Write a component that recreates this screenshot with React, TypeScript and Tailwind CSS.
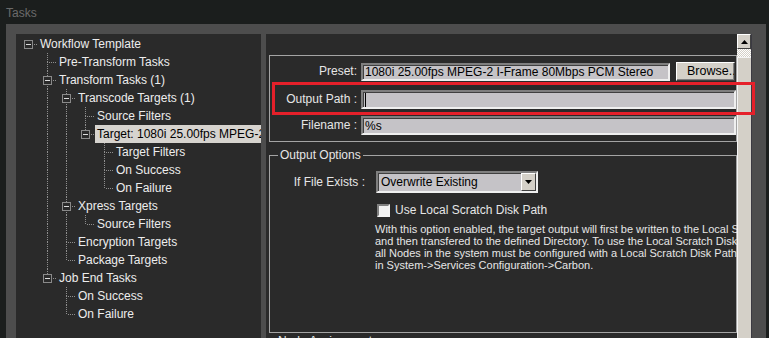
import React from 'react';

type TNode = { label: string; children?: TNode[]; selected?: boolean };

const tree: TNode = {
  label: 'Workflow Template',
  children: [
    { label: 'Pre-Transform Tasks' },
    {
      label: 'Transform Tasks (1)',
      children: [
        {
          label: 'Transcode Targets (1)',
          children: [
            { label: 'Source Filters' },
            {
              label: 'Target: 1080i 25.00fps MPEG-2 I-Frame 80Mbps PCM Stereo',
              selected: true,
              children: [{ label: 'Target Filters' }, { label: 'On Success' }, { label: 'On Failure' }],
            },
          ],
        },
        { label: 'Xpress Targets', children: [{ label: 'Source Filters' }] },
        { label: 'Encryption Targets' },
        { label: 'Package Targets' },
      ],
    },
    { label: 'Job End Tasks', children: [{ label: 'On Success' }, { label: 'On Failure' }] },
  ],
};

type Row = { node: TNode; level: number; guides: boolean[]; last: boolean };

// guides[i] = does the ancestor at level i still have siblings below (draw a vertical line)
function flatten(node: TNode, level: number, guides: boolean[], last: boolean, out: Row[]) {
  out.push({ node, level, guides, last });
  const kids = node.children ?? [];
  kids.forEach((c, i) => {
    flatten(c, level + 1, [...guides, level > 0 && !last], i === kids.length - 1, out);
  });
}

const DOT = '#8e8e8e';

// one 19px column of the tree: dotted connectors and the +/- box
const Cell = ({ top, bottom, stub, box }: { top?: boolean; bottom?: boolean; stub?: boolean; box?: boolean }) => (
  <svg width="19" height="18" className="shrink-0" shapeRendering="crispEdges">
    {top && <line x1="8.5" y1="0" x2="8.5" y2="9" stroke={DOT} strokeDasharray="1 1" />}
    {bottom && <line x1="8.5" y1="9" x2="8.5" y2="18" stroke={DOT} strokeDasharray="1 1" />}
    {stub && <line x1="10" y1="9.5" x2="18" y2="9.5" stroke={DOT} strokeDasharray="1 1" />}
    {box && (
      <>
        <rect x="4.5" y="5.5" width="8" height="8" fill="#2a2a2a" stroke="#8a8a8a" />
        <line x1="6" y1="9.5" x2="11" y2="9.5" stroke="#dcdcdc" />
      </>
    )}
  </svg>
);

const TreeRow = ({ row }: { row: Row }) => {
  const { node, level, guides, last } = row;
  return (
    <div className="flex h-[18px]">
      {guides.map((g, i) => (
        <Cell key={i} top={g} bottom={g} />
      ))}
      <Cell top={level > 0} bottom={level > 0 && !last} stub box={!!node.children} />
      <span
        className={`-ml-[1px] px-[2px] leading-[18px] whitespace-nowrap ${
          node.selected ? 'bg-[#d6d3ce] text-black' : 'text-[#ededed]'
        }`}
      >
        {node.label}
      </span>
    </div>
  );
};

const Field = ({ value, caret, className }: { value?: string; caret?: boolean; className: string }) => (
  <div
    className={`flex items-center overflow-hidden whitespace-nowrap border-2 border-t-[#7f7f7f] border-l-[#7f7f7f] border-r-[#efefef] border-b-[#efefef] bg-[#c5c3c7] pl-[2px] text-black shadow-[inset_1px_1px_0_#404040] ${className}`}
  >
    {caret && <span className="h-[14px] w-[1px] bg-black" />}
    {value}
  </div>
);

export default function App() {
  const rows: Row[] = [];
  flatten(tree, 0, [], true, rows);

  return (
    <div className="relative h-[338px] w-[769px] overflow-hidden bg-[#1b1e1d] font-['Liberation_Sans',Arial,sans-serif] text-[12px]">
      <div className="h-[24px] pl-[6px] pt-[6px] leading-[14px] text-[#6b6b6b]">Tasks</div>

      <div className="ml-[6px] flex h-[314px] w-[760px] bg-[#4d4d4d] pl-[10px] pt-[10px]">
        {/* tree */}
        <div className="h-full w-[245px] shrink-0 overflow-hidden bg-[#2a2a2a] pl-[4px] pt-[1px]">
          {rows.map((r, i) => (
            <TreeRow key={i} row={r} />
          ))}
        </div>

        {/* properties */}
        <div className="ml-[5px] h-full w-[471px] shrink-0 overflow-hidden bg-[#2a2a2a] pl-[3px] pt-[21px] text-[#e6e6e6]">
          <div className="w-[468px] border border-[#a4a4a4] pb-[6px] pt-[6px]">
            <div className="flex h-[19px]">
              <div className="w-[87px] text-right leading-[19px]">Preset:</div>
              <Field value="1080i 25.00fps MPEG-2 I-Frame 80Mbps PCM Stereo" className="ml-[4px] mt-[1px] h-[18px] w-[309px]" />
              <div className="ml-[6px] h-[19px] w-[59px] overflow-hidden whitespace-nowrap border border-t-white border-l-white border-r-[#404040] border-b-[#404040] bg-[#d4d0c8] pl-[10px] text-[12.5px] leading-[17px] text-black shadow-[inset_-1px_-1px_0_#808080]">
                Browse...
              </div>
            </div>
            <div className="mt-[9px] flex h-[19px]">
              <div className="w-[87px] text-right leading-[19px]">Output Path :</div>
              <Field caret className="ml-[4px] h-[19px] w-[375px]" />
            </div>
            <div className="mt-[7px] flex h-[19px]">
              <div className="w-[87px] text-right leading-[19px]">Filename :</div>
              <Field value="%s" className="ml-[4px] h-[19px] w-[375px]" />
            </div>
          </div>

          <fieldset className="mt-[6px] h-[185px] w-[468px] min-w-0 border border-[#a4a4a4]">
            <legend className="ml-[8px] px-[2px] leading-[14px]">Output Options</legend>
            <div className="mt-[9px] flex h-[22px] items-center">
              <div className="w-[95px] text-right">If File Exists :</div>
              <div className="ml-[11px] flex h-[22px] w-[162px] border-2 border-t-[#7f7f7f] border-l-[#7f7f7f] border-r-[#efefef] border-b-[#efefef] bg-[#c5c3c7] shadow-[inset_1px_1px_0_#404040]">
                <div className="flex-1 pl-[3px] leading-[18px] text-black">Overwrite Existing</div>
                <div className="flex h-[18px] w-[15px] items-center justify-center border border-t-white border-l-white border-r-[#404040] border-b-[#404040] bg-[#d4d0c8]">
                  <svg width="7" height="4" viewBox="0 0 7 4">
                    <polygon points="0,0 7,0 3.5,4" fill="#000" />
                  </svg>
                </div>
              </div>
            </div>
            <div className="mt-[11px] flex h-[13px] items-center">
              <div className="ml-[107px] h-[13px] w-[13px] border-2 border-t-[#808080] border-l-[#808080] border-r-[#f4f4f4] border-b-[#f4f4f4] bg-[#f2f2f2]" />
              <div className="ml-[5px] leading-[13px]">Use Local Scratch Disk Path</div>
            </div>
            <div className="ml-[105px] mt-[6px] whitespace-nowrap text-[11px] leading-[12px]">
              <div>With this option enabled, the target output will first be written to the Local Scratch Disk Path</div>
              <div>and then transfered to the defined Directory. To use the Local Scratch Disk Path option,</div>
              <div>all Nodes in the system must be configured with a Local Scratch Disk Path</div>
              <div>in System-&gt;Services Configuration-&gt;Carbon.</div>
            </div>
          </fieldset>

          <fieldset className="mt-[1px] h-[60px] w-[468px] min-w-0 border border-[#a4a4a4]">
            <legend className="ml-[6px] px-[2px] leading-[14px]">Node Assignment</legend>
          </fieldset>
        </div>

        {/* scrollbar */}
        <div className="flex h-full w-[14px] shrink-0 flex-col">
          <div className="flex h-[15px] items-center justify-center border border-t-white border-l-white border-r-[#404040] border-b-[#404040] bg-[#d4d0c8]">
            <svg width="7" height="4" viewBox="0 0 7 4">
              <polygon points="3.5,0 7,4 0,4" fill="#000" />
            </svg>
          </div>
          <div className="h-[8px] bg-[image:repeating-conic-gradient(#d4d0c8_0%_25%,#ffffff_0%_50%)] bg-[length:2px_2px]" />
          <div className="flex-1 border-l border-t border-l-[#f4f4f4] border-t-[#f4f4f4] bg-[#d4d0c8]" />
        </div>
        <div className="h-full w-[1px] shrink-0 bg-[#3b3a42]" />
      </div>

      {/* red highlight */}
      <div className="pointer-events-none absolute left-[272px] top-[82px] h-[33px] w-[483px] border-[3px] border-[#e5202a]" />
    </div>
  );
}
